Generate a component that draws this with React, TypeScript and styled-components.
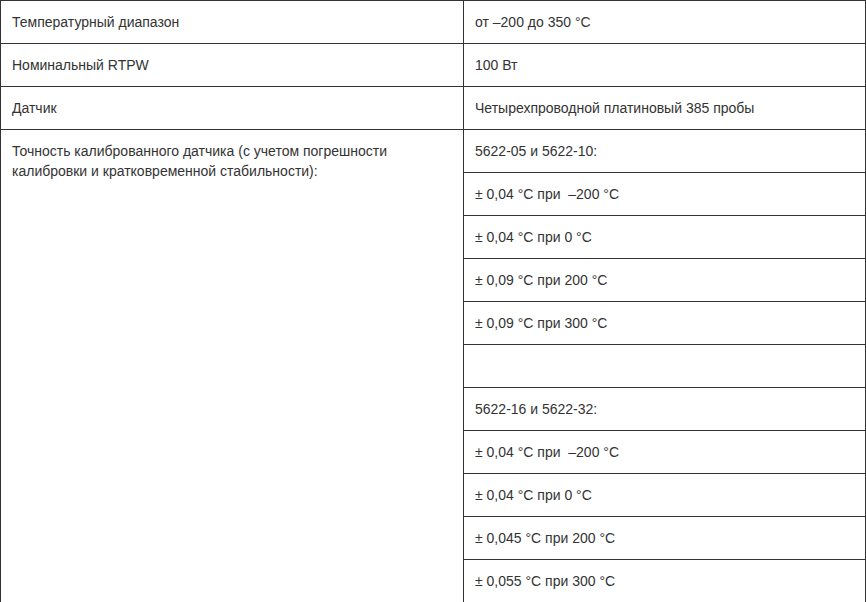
import styled, { createGlobalStyle } from 'styled-components'

const Global = createGlobalStyle`
body {
  margin: 0;
  background: #fff;
  font-family: "Liberation Sans", Arial, sans-serif;
}
`
const Table = styled.table`
width: 866px;
border-collapse: collapse;
table-layout: fixed;
font-size: 14px;
line-height: 20px;
color: #333;
`
const Cell = styled.td`
border: 1px solid #333;
padding: 11px 11px 11px 11px;
vertical-align: top;
height: 20px;
`

const specs = [
    ['Температурный диапазон', 'от –200 до 350 °C'],
    ['Номинальный RTPW', '100 Вт'],
    ['Датчик', 'Четырехпроводной платиновый 385 пробы'],
]

const accuracy = [
    '5622-05 и 5622-10:',
    '± 0,04 °C при \u00a0–200 °C',
    '± 0,04 °C при 0 °C',
    '± 0,09 °C при 200 °C',
    '± 0,09 °C при 300 °C',
    '\u00a0',
    '5622-16 и 5622-32:',
    '± 0,04 °C при \u00a0–200 °C',
    '± 0,04 °C при 0 °C',
    '± 0,045 °C при 200 °C',
    '± 0,055 °C при 300 °C',
]

const App = () => {
    return (
        <>
            <Global />
            <Table>
                <colgroup>
                    <col style={{ width: 463 }} />
                    <col />
                </colgroup>
                <tbody>
                    {specs.map(([name, value]) => (
                        <tr key={name}>
                            <Cell>{name}</Cell>
                            <Cell>{value}</Cell>
                        </tr>
                    ))}
                    {accuracy.map((value, i) => (
                        <tr key={i}>
                            {i === 0 && (
                                <Cell rowSpan={accuracy.length}>
                                    Точность калиброванного датчика (с учетом погрешности калибровки и кратковременной стабильности):
                                </Cell>
                            )}
                            <Cell>{value}</Cell>
                        </tr>
                    ))}
                </tbody>
            </Table>
        </>
    )
}

export default App
